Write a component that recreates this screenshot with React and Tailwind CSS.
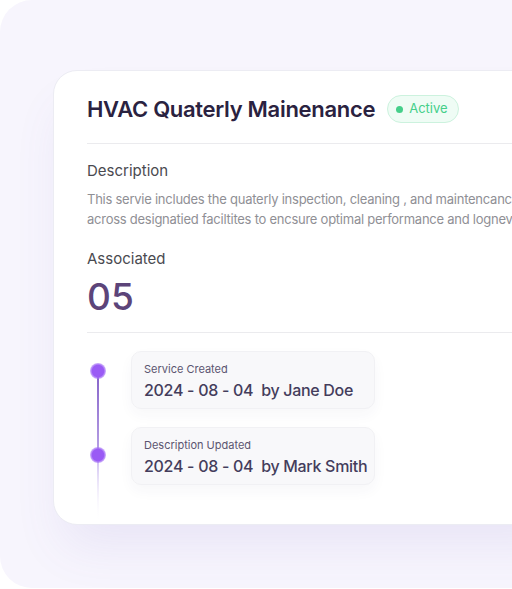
import React from 'react';

// Timeline rail: dots + fading line
const Rail = () => (
  <svg width="22" height="172" viewBox="0 0 22 172" className="shrink-0">
    <defs>
      <linearGradient id="railTop" x1="0" y1="0" x2="0" y2="1">
        <stop offset="0" stopColor="#8562c9" />
        <stop offset="1" stopColor="#b9a3e6" />
      </linearGradient>
      <linearGradient id="railFade" x1="0" y1="0" x2="0" y2="1">
        <stop offset="0" stopColor="#c8b6ef" />
        <stop offset="1" stopColor="#ffffff" stopOpacity="0" />
      </linearGradient>
      <radialGradient id="dot" cx="0.5" cy="0.5" r="0.5">
        <stop offset="0.72" stopColor="#9a5bf5" />
        <stop offset="1" stopColor="#a979f7" stopOpacity="0.55" />
      </radialGradient>
    </defs>
    <rect x="10" y="20" width="2" height="84" fill="url(#railTop)" />
    <rect x="10" y="104" width="2" height="68" fill="url(#railFade)" />
    <circle cx="11" cy="20" r="8" fill="url(#dot)" />
    <circle cx="11" cy="104" r="8" fill="url(#dot)" />
  </svg>
);

const events = [
  { label: 'Service Created', date: '2024 - 08 - 04', by: 'by Jane Doe' },
  { label: 'Description Updated', date: '2024 - 08 - 04', by: 'by Mark Smith' },
];

export default function App() {
  return (
    <div className="w-[512px] h-[589px] bg-white overflow-hidden" style={{ fontFamily: 'Inter, "Noto Sans", sans-serif' }}>
      <div className="w-[560px] h-[588px] rounded-[32px] bg-[#f7f5fd] pl-[53px] pt-[70px]">
        <div className="w-[520px] h-[455px] rounded-3xl bg-white border border-[#ececf3] pl-[33px] pt-[24px] overflow-hidden shadow-[0_30px_50px_-10px_rgba(110,90,190,0.10)]">
          <div className="flex items-center gap-[12px] h-7">
            <h1 className="text-[22px] font-semibold text-[#2a2240] tracking-[-0.3px] leading-none">
              HVAC Quaterly Mainenance
            </h1>
            <span className="flex items-center gap-[6px] h-7 pl-[8px] pr-[10px] rounded-full bg-[#effcf5] border border-[#ccf2de] text-[13px] text-[#45cf8a]">
              <span className="w-[7px] h-[7px] rounded-full bg-[#45cf8a]" />
              Active
            </span>
          </div>

          <div className="mt-[20px] h-px bg-[#ebebee]" />

          <div className="mt-[17px] text-[15px] leading-5 text-[#4a4a50]">Description</div>
          <p className="mt-2 text-[13px] leading-5 tracking-[-0.25px] text-[#8f8f95] whitespace-nowrap">
            This servie includes the quaterly inspection, cleaning , and maintencance of HVAC systems
            <br />
            across designatied faciltites to encsure optimal performance and lognevity.
          </p>

          <div className="mt-5 text-[15px] leading-5 text-[#4a4a50]">Associated</div>
          <div className="mt-2 text-[37px] leading-10 font-medium text-[#5c4479]">05</div>

          <div className="mt-[15px] h-px bg-[#ebebee]" />

          <div className="mt-[18px] flex gap-[22px]">
            <Rail />
            <div className="flex flex-col gap-[18px]">
              {events.map((e) => (
                <div
                  key={e.label}
                  className="w-[244px] h-[58px] rounded-[10px] bg-[#f8f8fa] border border-[#f1f1f4] px-[12px] pt-[9px] shadow-[0_6px_14px_rgba(60,50,100,0.04)]"
                >
                  <div className="text-[11px] leading-4 text-[#5b5570]">{e.label}</div>
                  <div className="mt-[3px] text-[16px] leading-5 font-medium tracking-[-0.3px] text-[#443d5c] whitespace-nowrap">
                    {e.date}&nbsp;&nbsp;{e.by}
                  </div>
                </div>
              ))}
            </div>
          </div>
        </div>
      </div>
    </div>
  );
}
